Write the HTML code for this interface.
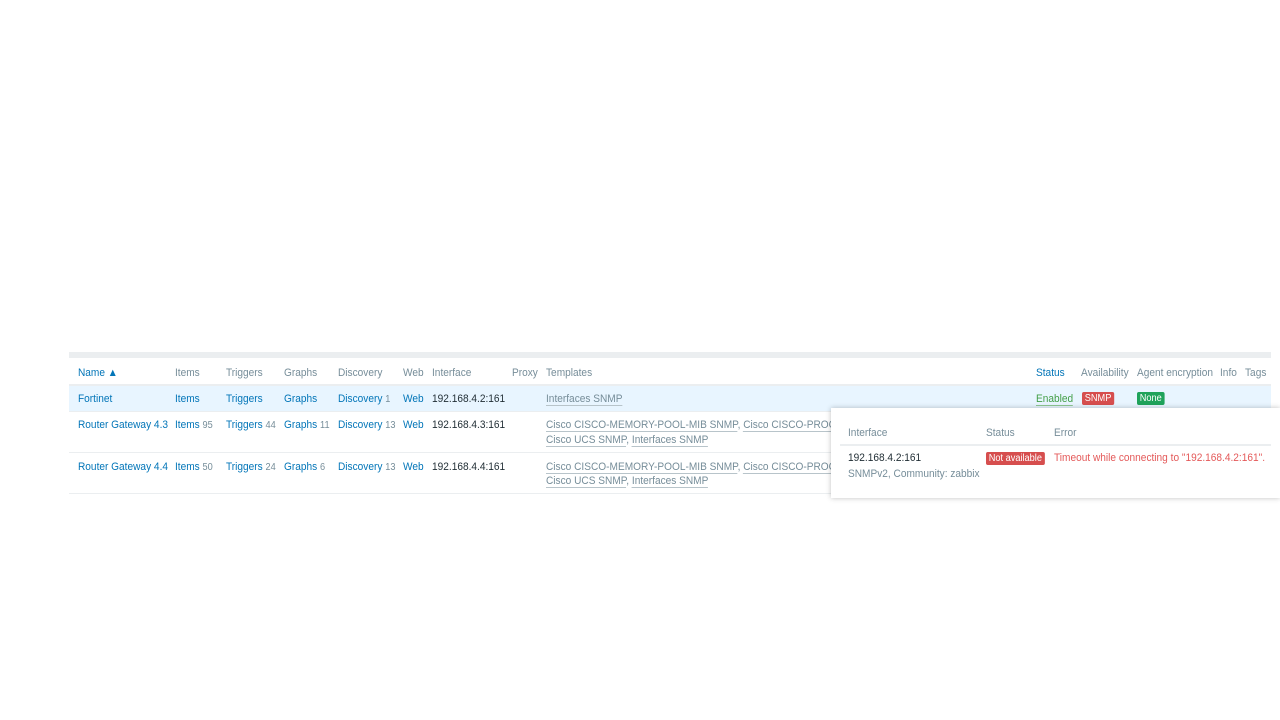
<!DOCTYPE html>
<html><head><meta charset="utf-8"><style>
*{margin:0;padding:0;box-sizing:border-box}
body{width:1280px;height:720px;background:#fff;font-family:"Liberation Sans",sans-serif;font-size:11px;color:#1f2c33;position:relative;overflow:hidden}
.a{position:absolute;white-space:nowrap;transform:scaleX(0.92);transform-origin:0 0;margin-top:1px}
.l{color:#0275b8}
.g{color:#768d99}
.n{color:#768d99;font-size:10px}
.t{color:#768d99;border-bottom:1px solid #b8c4ca}
.bar{position:absolute;left:69px;top:352px;width:1202px;height:6px;background:#ebeef0}
.r1{position:absolute;left:69px;top:386px;width:1202px;height:25px;background:#e8f5ff}
.ln{position:absolute;left:69px;width:1202px;height:1px;background:#ebeef0}
.badge{position:absolute;color:#fff;font-size:10px;padding:1px 3px;border-radius:2px;line-height:11px;transform:scaleX(0.92);transform-origin:0 0;white-space:nowrap}
.pop{position:absolute;left:831px;top:408px;width:449px;height:90px;background:#fff;box-shadow:0 0 5px rgba(0,0,0,.25)}
</style></head><body>
<div class="bar"></div>
<div class="ln" style="top:384px;height:2px"></div>
<div class="r1"></div>
<div class="ln" style="top:411px"></div>
<div class="ln" style="top:452px"></div>
<div class="ln" style="top:493px"></div>

<div class="a l" style="left:78px;top:366px">Name ▲</div>
<div class="a g" style="left:175px;top:366px">Items</div>
<div class="a g" style="left:226px;top:366px">Triggers</div>
<div class="a g" style="left:284px;top:366px">Graphs</div>
<div class="a g" style="left:338px;top:366px">Discovery</div>
<div class="a g" style="left:403px;top:366px">Web</div>
<div class="a g" style="left:432px;top:366px">Interface</div>
<div class="a g" style="left:512px;top:366px">Proxy</div>
<div class="a g" style="left:546px;top:366px">Templates</div>
<div class="a l" style="left:1036px;top:366px">Status</div>
<div class="a g" style="left:1081px;top:366px">Availability</div>
<div class="a g" style="left:1137px;top:366px">Agent encryption</div>
<div class="a g" style="left:1220px;top:366px">Info</div>
<div class="a g" style="left:1245px;top:366px">Tags</div>

<div class="a l" style="left:78px;top:392px">Fortinet</div>
<div class="a l" style="left:175px;top:392px">Items</div>
<div class="a l" style="left:226px;top:392px">Triggers</div>
<div class="a l" style="left:284px;top:392px">Graphs</div>
<div class="a l" style="left:338px;top:392px">Discovery <span class="n">1</span></div>
<div class="a l" style="left:403px;top:392px">Web</div>
<div class="a" style="left:432px;top:392px">192.168.4.2:161</div>
<div class="a" style="left:546px;top:392px"><span class="t">Interfaces SNMP</span></div>
<div class="a" style="left:1036px;top:392px;color:#429e47;border-bottom:1px solid #8fc792">Enabled</div>
<div class="badge" style="left:1082px;top:392px;background:#d64e4e">SNMP</div>
<div class="badge" style="left:1137px;top:392px;background:#1fa35b">None</div>

<div class="a l" style="left:78px;top:418px">Router Gateway 4.3</div>
<div class="a l" style="left:175px;top:418px">Items <span class="n">95</span></div>
<div class="a l" style="left:226px;top:418px">Triggers <span class="n">44</span></div>
<div class="a l" style="left:284px;top:418px">Graphs <span class="n">11</span></div>
<div class="a l" style="left:338px;top:418px">Discovery <span class="n">13</span></div>
<div class="a l" style="left:403px;top:418px">Web</div>
<div class="a" style="left:432px;top:418px">192.168.4.3:161</div>
<div class="a" style="left:546px;top:418px"><span class="t">Cisco CISCO-MEMORY-POOL-MIB SNMP</span><span class="g">, </span><span class="t">Cisco CISCO-PROCESS</span></div>
<div class="a" style="left:546px;top:433px"><span class="t">Cisco UCS SNMP</span><span class="g">, </span><span class="t">Interfaces SNMP</span></div>

<div class="a l" style="left:78px;top:460px">Router Gateway 4.4</div>
<div class="a l" style="left:175px;top:460px">Items <span class="n">50</span></div>
<div class="a l" style="left:226px;top:460px">Triggers <span class="n">24</span></div>
<div class="a l" style="left:284px;top:460px">Graphs <span class="n">6</span></div>
<div class="a l" style="left:338px;top:460px">Discovery <span class="n">13</span></div>
<div class="a l" style="left:403px;top:460px">Web</div>
<div class="a" style="left:432px;top:460px">192.168.4.4:161</div>
<div class="a" style="left:546px;top:460px"><span class="t">Cisco CISCO-MEMORY-POOL-MIB SNMP</span><span class="g">, </span><span class="t">Cisco CISCO-PROCESS</span></div>
<div class="a" style="left:546px;top:474px"><span class="t">Cisco UCS SNMP</span><span class="g">, </span><span class="t">Interfaces SNMP</span></div>

<div class="pop">
<div class="a g" style="left:17px;top:18px">Interface</div>
<div class="a g" style="left:155px;top:18px">Status</div>
<div class="a g" style="left:223px;top:18px">Error</div>
<div style="position:absolute;left:9px;top:36px;width:431px;height:2px;background:#ebeef0"></div>
<div class="a" style="left:17px;top:43px">192.168.4.2:161</div>
<div class="a g" style="left:17px;top:59px">SNMPv2, Community: zabbix</div>
<div class="badge" style="left:155px;top:44px;background:#d64e4e">Not available</div>
<div class="a" style="left:223px;top:43px;color:#e45959">Timeout while connecting to "192.168.4.2:161".</div>
</div>
</body></html>
